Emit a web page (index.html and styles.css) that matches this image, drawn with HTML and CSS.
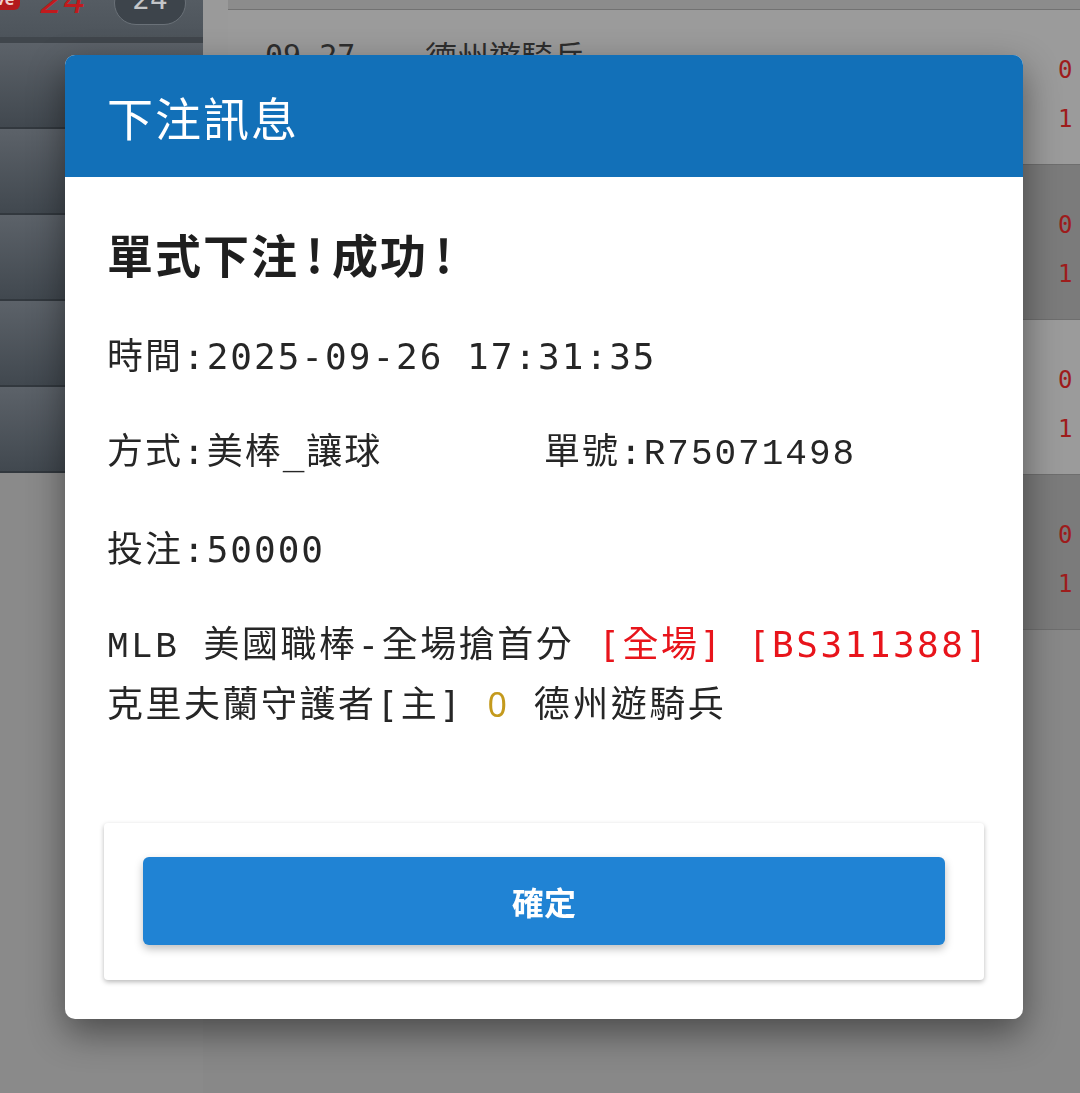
FILE: index.html
```html
<!DOCTYPE html>
<html lang="zh-Hant">
<head>
    <meta charset="UTF-8">
    <meta name="viewport" content="width=device-width, initial-scale=1.0">
    <title>下注訊息</title>
    <link rel="stylesheet" href="styles.css">
</head>
<body>
    <div class="page">
        <aside class="sidebar">
            <div class="side-top">
                <span class="hot-badge">live</span>
                <span class="hot-count">24</span>
                <span class="count-pill">24</span>
            </div>
            <div class="side-row"></div>
            <div class="side-row"></div>
            <div class="side-row"></div>
            <div class="side-row"></div>
            <div class="side-row"></div>
        </aside>
        <main class="list">
            <div class="list-rows">
                <div class="list-top"></div>
                <div class="match light">
                    <span class="m-date">09-27</span>
                    <span class="m-team">德州遊騎兵</span>
                    <div class="m-odds"><span>0</span><span>1</span></div>
                </div>
                <div class="match dark">
                    <span class="m-date">09-27</span>
                    <span class="m-team">西雅圖水手</span>
                    <div class="m-odds"><span>0</span><span>1</span></div>
                </div>
                <div class="match light">
                    <span class="m-date">09-27</span>
                    <span class="m-team">休士頓太空人</span>
                    <div class="m-odds"><span>0</span><span>1</span></div>
                </div>
                <div class="match dark">
                    <span class="m-date">09-27</span>
                    <span class="m-team">紐約洋基</span>
                    <div class="m-odds"><span>0</span><span>1</span></div>
                </div>
            </div>
        </main>
    </div>

    <div class="overlay">
        <div class="modal">
            <div class="modal-header">下注訊息</div>
            <div class="modal-body">
                <div class="modal-text">
                    <h2 class="result">單式下注<span class="bang">!</span>成功<span class="bang">!</span></h2>
                    <p class="info">時間:2025-09-26 17:31:35</p>
                    <div class="info info-cols">
                        <span>方式:美棒_讓球</span>
                        <span>單號:<span class="serial">R75071498</span></span>
                    </div>
                    <p class="info">投注:50000</p>
                    <p class="info detail">
                        <span class="league">MLB</span> 美國職棒-全場搶首分 <span class="red">[全場]</span> <span class="red">[BS311388]</span><br>
                        克里夫蘭守護者[主] <span class="line">0</span> 德州遊騎兵
                    </p>
                </div>
                <div class="modal-footer">
                    <button type="button" class="confirm-button">確定</button>
                </div>
            </div>
        </div>
    </div>
</body>
</html>
```

FILE: styles.css
```css
body {
    margin: 0;
    padding: 0;
    background-color: #888888;
    font-family: "Noto Sans CJK TC", sans-serif;
    overflow: hidden;
}
.page {
    display: grid;
    grid-template-columns: 203px 1fr;
    height: 1093px;
}

/* dimmed page behind the dialog */
.sidebar {
    background-color: #8a8a8a;
}
.side-top {
    height: 37px;
    background: linear-gradient(#555c63, #4d545b);
    border-bottom: 6px solid #40464c;
    display: flex;
    align-items: flex-end;
    overflow: hidden;
}
.hot-badge {
    background-color: #b3191c;
    color: #f0d0d0;
    font: bold 16px "Noto Sans", sans-serif;
    border-radius: 6px;
    padding: 0 6px;
    margin: 0 20px 27px -20px;
}
.hot-count {
    color: #c11a1d;
    font: italic 36px "DejaVu Sans", sans-serif;
    margin-bottom: 16px;
}
.count-pill {
    width: 70px;
    height: 42px;
    margin: 0 0 12px 28px;
    border-radius: 22px;
    background-color: #3d444b;
    border: 1px solid #6a7178;
    color: #c4c6c8;
    font: 28px "DejaVu Sans", sans-serif;
    text-align: center;
    line-height: 36px;
}
.side-row {
    height: 84px;
    background: linear-gradient(#5c6269, #41484f);
    border-bottom: 2px solid #32383e;
}
.list-rows {
    border-left: 25px solid #9a9a9a;
}
.list-top {
    height: 9px;
    background-color: #8c8c8c;
    border-bottom: 1px solid #727272;
}
.match {
    height: 155px;
    border-bottom: 1px solid #6e6e6e;
    display: flex;
    align-items: flex-start;
    padding-left: 37px;
    box-sizing: border-box;
}
.match.light {
    background-color: #9b9b9b;
}
.match.dark {
    background-color: #7b7b7b;
}
.m-date {
    font: 30px "DejaVu Sans Mono", monospace;
    color: #2e2e2e;
    margin-top: 28px;
    width: 160px;
}
.m-team {
    font: 32px "Noto Sans CJK TC", sans-serif;
    color: #2e2e2e;
    margin-top: 22px;
}
.m-odds {
    margin-left: auto;
    width: 22px;
    padding-top: 36px;
    display: flex;
    flex-direction: column;
    color: #9e1c1c;
    font: 24px "DejaVu Sans Mono", monospace;
    line-height: 49px;
}

/* dialog */
.overlay {
    position: fixed;
    inset: 0;
    padding: 55px 57px 0 65px;
}
.modal {
    background-color: #ffffff;
    border-radius: 10px;
    overflow: hidden;
    box-shadow: 0 14px 36px rgba(0, 0, 0, 0.45);
}
.modal-header {
    height: 122px;
    background-color: #1270b8;
    color: #ffffff;
    font-size: 46px;
    letter-spacing: 2px;
    line-height: 122px;
    padding-left: 42px;
}
.modal-body {
    padding: 46px 39px 39px;
}
.modal-text {
    padding: 0 3px;
    color: #262626;
    font-family: "DejaVu Sans Mono", "Noto Sans CJK TC", monospace;
    font-size: 36px;
    letter-spacing: 2px;
}
.result {
    margin: 0 0 45px;
    font-family: "Noto Sans CJK TC", sans-serif;
    font-size: 46px;
    font-weight: bold;
    line-height: 60px;
    color: #1f1f1f;
}
.bang {
    margin: 0 7px;
}
.info {
    margin: 0 0 38px;
    line-height: 57px;
    white-space: nowrap;
}
.info-cols {
    display: grid;
    grid-template-columns: 1fr 1fr;
}
.serial,
.league {
    font-family: "Liberation Mono", monospace;
}
.detail {
    margin-bottom: 90px;
    letter-spacing: 2.5px;
}
.red {
    color: #e8141b;
}
.line {
    color: #c49a1d;
    font-family: "Noto Sans", sans-serif;
    font-size: 34px;
}
.modal-footer {
    padding: 34px 39px 35px;
    border-radius: 4px;
    box-shadow: 0 2px 5px rgba(0, 0, 0, 0.28);
}
.confirm-button {
    display: block;
    width: 100%;
    height: 88px;
    border: none;
    border-radius: 6px;
    background-color: #2083d4;
    color: #ffffff;
    font-family: "Noto Sans CJK TC", sans-serif;
    font-size: 32px;
    font-weight: bold;
    box-shadow: 0 4px 8px rgba(0, 0, 0, 0.25);
    cursor: pointer;
}
```
